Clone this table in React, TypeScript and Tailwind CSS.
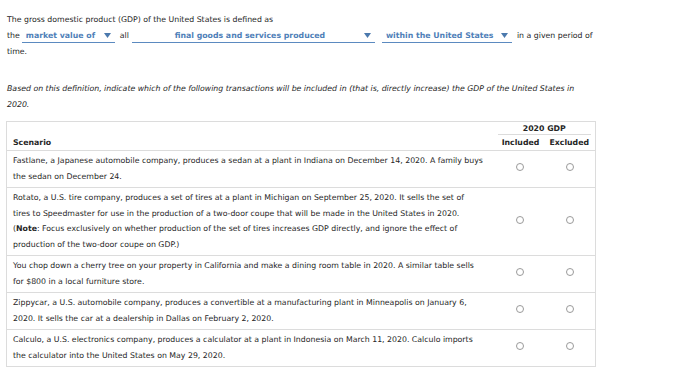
type Row = { id: number; text: React.ReactNode };

const rows: Row[] = [
  {
    id: 1,
    text: (
      <>
        Fastlane, a Japanese automobile company, produces a sedan at a plant in Indiana on December 14, 2020. A family buys
        <br />
        the sedan on December 24.
      </>
    ),
  },
  {
    id: 2,
    text: (
      <>
        Rotato, a U.S. tire company, produces a set of tires at a plant in Michigan on September 25, 2020. It sells the set of
        <br />
        tires to Speedmaster for use in the production of a two-door coupe that will be made in the United States in 2020.
        <br />
        (<span className="font-bold">Note</span>: Focus exclusively on whether production of the set of tires increases GDP directly, and ignore the effect of
        <br />
        production of the two-door coupe on GDP.)
      </>
    ),
  },
  {
    id: 3,
    text: (
      <>
        You chop down a cherry tree on your property in California and make a dining room table in 2020. A similar table sells
        <br />
        for $800 in a local furniture store.
      </>
    ),
  },
  {
    id: 4,
    text: (
      <>
        Zippycar, a U.S. automobile company, produces a convertible at a manufacturing plant in Minneapolis on January 6,
        <br />
        2020. It sells the car at a dealership in Dallas on February 2, 2020.
      </>
    ),
  },
  {
    id: 5,
    text: (
      <>
        Calculo, a U.S. electronics company, produces a calculator at a plant in Indonesia on March 11, 2020. Calculo imports
        <br />
        the calculator into the United States on May 29, 2020.
      </>
    ),
  },
];

function Caret() {
  return (
    <svg width="7" height="5" viewBox="0 0 7 5" className="shrink-0">
      <path d="M0 0 H7 L3.5 5 Z" fill="#4b79ad" />
    </svg>
  );
}

function Dropdown({ value, width, center, className = "" }: { value: string; width: string; center?: boolean; className?: string }) {
  return (
    <span className={`inline-flex items-center border-b border-[#5b8ac0] h-[13px] px-[4px] ${width} ${className}`}>
      <span className={`flex-1 font-bold text-[#4f80b8] whitespace-nowrap ${center ? "text-center" : ""}`}>{value}</span>
      <Caret />
    </span>
  );
}

function Radio() {
  return <span className="inline-block w-[8px] h-[8px] rounded-full border border-[#9a9a9a] bg-white" />;
}

export default function App() {
  return (
    <div
      className="w-[700px] h-[378px] bg-white text-[#262626] text-[7.8px] leading-[16px] pt-[12px] pl-[7px] overflow-hidden"
      style={{ fontFamily: '"DejaVu Sans", Verdana, sans-serif' }}
    >
      <div>The gross domestic product (GDP) of the United States is defined as</div>
      <div className="flex items-center h-[16px] whitespace-nowrap">
        <span>the</span>
        <Dropdown value="market value of" width="w-[93px]" className="ml-[2px]" />
        <span className="ml-[5px]">all</span>
        <Dropdown value="final goods and services produced" width="w-[243px]" center className="ml-[3px]" />
        <Dropdown value="within the United States" width="w-[130px]" className="ml-[7px]" />
        <span className="ml-[5px]">in a given period of</span>
      </div>
      <div>time.</div>

      <p className="italic mt-[21px]">
        Based on this definition, indicate which of the following transactions will be included in (that is, directly increase) the GDP of the United States in
        <br />
        2020.
      </p>

      <table className="mt-[8px] -ml-[1px] w-[590px] border-collapse border border-[#dcdcdc]">
        <thead>
          <tr>
            <th className="align-bottom text-left font-bold pl-[6px] p-0 leading-[15px]" rowSpan={2}>
              Scenario
            </th>
            <th colSpan={2} className="p-0 pt-[2px] px-[4px]">
              <div className="border-b border-[#dcdcdc] leading-[10px] font-bold">2020 GDP</div>
            </th>
          </tr>
          <tr className="border-b border-[#dcdcdc]">
            <th className="w-[52px] p-0 font-bold leading-[15px] pl-[2px]">Included</th>
            <th className="w-[50px] p-0 font-bold leading-[15px] pr-[2px]">Excluded</th>
          </tr>
        </thead>
        <tbody>
          {rows.map((r) => (
            <tr key={r.id} className="border-b border-[#dcdcdc]">
              <td className="pl-[6px] pr-[2px] pt-[2px] pb-[3px] leading-[15.5px] whitespace-nowrap">{r.text}</td>
              <td className="text-center align-middle">
                <Radio />
              </td>
              <td className="text-center align-middle">
                <Radio />
              </td>
            </tr>
          ))}
        </tbody>
      </table>
    </div>
  );
}
